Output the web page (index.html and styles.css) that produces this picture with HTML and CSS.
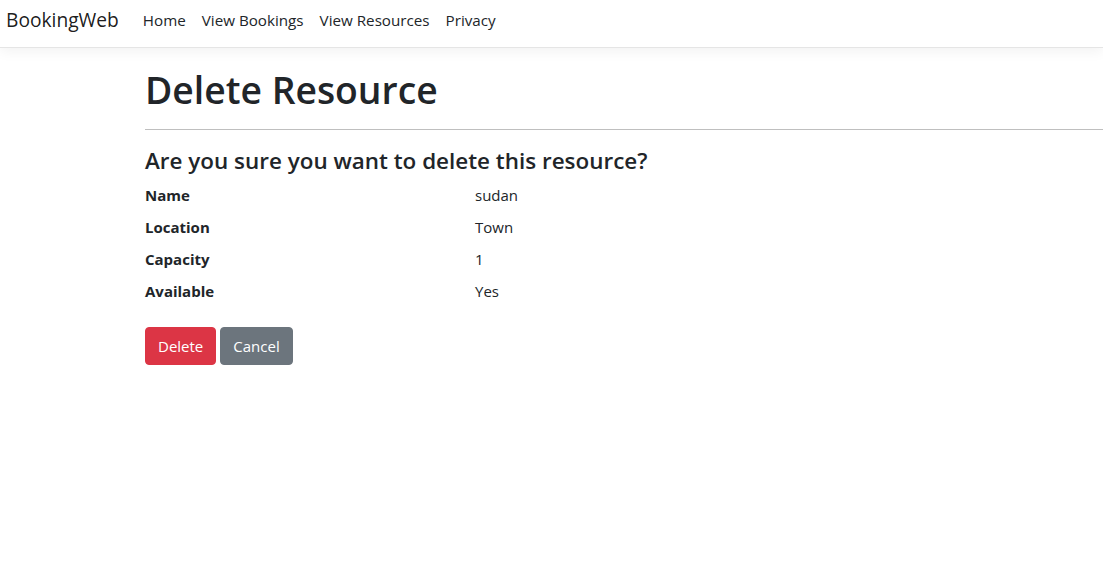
FILE: index.html
```html
<!DOCTYPE html>
<html lang="en">
<head>
<meta charset="utf-8">
<title>Delete Resource - BookingWeb</title>
<link rel="stylesheet" href="styles.css">
</head>
<body>
<header class="navbar">
  <a class="brand" href="#">BookingWeb</a>
  <ul class="nav-links">
    <li><a href="#">Home</a></li>
    <li><a href="#">View Bookings</a></li>
    <li><a href="#">View Resources</a></li>
    <li><a href="#">Privacy</a></li>
  </ul>
</header>
<main class="content">
  <h1 class="title">Delete Resource</h1>
  <hr class="divider">
  <h3 class="question">Are you sure you want to delete this resource?</h3>
  <dl class="details">
    <dt>Name</dt><dd>sudan</dd>
    <dt>Location</dt><dd>Town</dd>
    <dt>Capacity</dt><dd>1</dd>
    <dt>Available</dt><dd>Yes</dd>
  </dl>
  <form class="actions">
    <button type="button" class="btn btn-danger">Delete</button>
    <a href="#" class="btn btn-secondary">Cancel</a>
  </form>
</main>
</body>
</html>
```
FILE: styles.css
```css
* { box-sizing: border-box; }
html, body { margin: 0; padding: 0; }
body {
  font-family: "Open Sans", "Noto Sans", sans-serif;
  font-size: 15px;
  line-height: 24px;
  color: #212529;
  background: #fff;
}
a { text-decoration: none; color: inherit; }

.navbar {
  display: flex;
  align-items: center;
  height: 48px;
  padding: 0 6px 7px;
  background: #fff;
  border-bottom: 1px solid #e5e5e5;
  box-shadow: 0 4px 12px rgba(0,0,0,0.05);
}
.brand {
  font-size: 19.2px;
  color: rgba(0,0,0,0.9);
  margin-right: 16px;
  padding: 5px 0;
}
.nav-links {
  display: flex;
  list-style: none;
  margin: 0;
  padding: 0;
}
.nav-links a {
  display: block;
  padding: 8px 8px;
  font-size: 15.2px;
  line-height: 24px;
  color: #212529;
}

.content {
  padding: 20px 0 0 145px;
}
.title {
  margin: 0 0 8px;
  font-size: 37.3px;
  font-weight: 600;
  line-height: 1.2;
}
.divider {
  margin: 16px 0 18px;
  border: 0;
  border-top: 1px solid rgba(0,0,0,0.25);
}
.question {
  margin: 0 0 8px;
  font-size: 22.45px;
  font-weight: 600;
  line-height: 1.2;
}
.details {
  display: grid;
  grid-template-columns: 330px 1fr;
  margin: 0 0 16px;
}
.details dt {
  font-weight: 700;
  margin: 0 0 8px;
}
.details dd {
  margin: 0 0 8px;
}
.actions {
  display: flex;
  gap: 4px;
}
.btn {
  display: inline-block;
  padding: 6px 12px;
  font-family: inherit;
  font-size: 15px;
  line-height: 24px;
  border: 1px solid transparent;
  border-radius: 4px;
  color: #fff;
  cursor: pointer;
}
.btn-danger { background: #dc3545; border-color: #dc3545; }
.btn-secondary { background: #6c757d; border-color: #6c757d; }
```
